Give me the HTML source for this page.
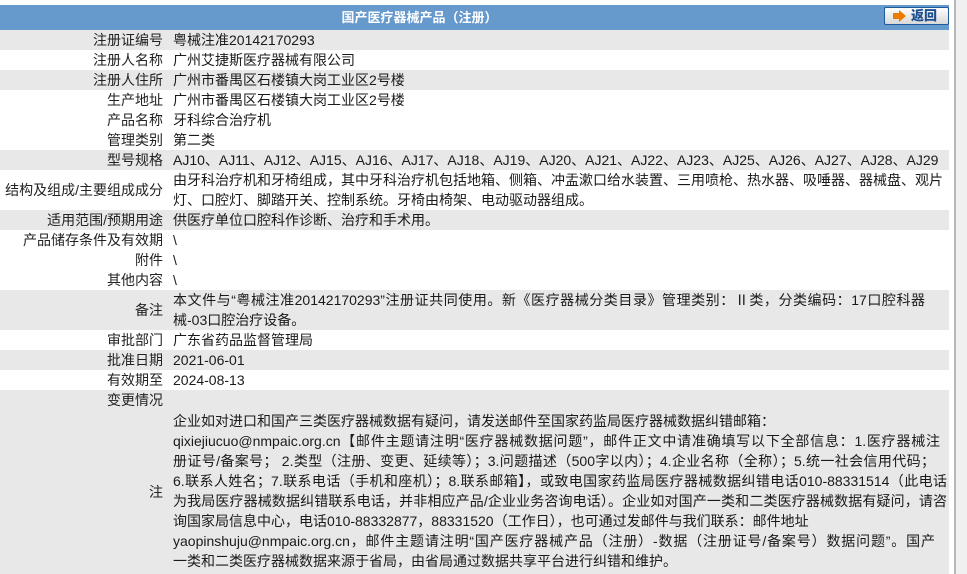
<!DOCTYPE html>
<html><head><meta charset="utf-8">
<style>
html,body{margin:0;padding:0;width:967px;height:574px;overflow:hidden;background:#fff;}
body{font-family:"Liberation Sans","Noto Sans CJK SC",sans-serif;font-size:14px;color:#1a1a1a;position:relative;}
#side{position:absolute;left:954px;top:0;width:13px;height:574px;background:#f0f0f0;border-left:2px solid #b8b8b8;box-sizing:border-box;}
#hdr{position:absolute;left:0;top:5px;width:949px;height:25px;background:#6699cc;color:#fff;font-weight:bold;font-size:13px;line-height:25px;text-align:center;}
#hdr span{position:relative;left:-55px;}
#btn{position:absolute;left:884px;top:7px;width:63px;height:16px;border:1px solid #1f5a9a;border-radius:2px;background:linear-gradient(#fdfdfd,#d8d8d8);color:#1c4f8f;font-weight:bold;font-size:13px;line-height:16px;}
#btn svg{position:absolute;left:8px;top:2px;}
#btn b{position:absolute;left:26px;top:0;}
.r{position:absolute;left:0;width:949px;}
.g{background:#e8e8e8;}
.l{position:absolute;left:0;width:163px;text-align:right;white-space:nowrap;color:#222;}
.v{position:absolute;left:173px;white-space:nowrap;line-height:20px;}
.v span{display:block;height:20px;}
.j{text-align:justify;text-align-last:justify;white-space:normal;}
</style></head><body>
<div id="side"></div>
<div id="hdr"><span>国产医疗器械产品（注册）</span></div>
<div id="btn"><svg width="14" height="12" viewBox="0 0 14 12"><path d="M0 3h6V0l7 6-7 6V9H0z" fill="#e87b00"/></svg><b>返回</b></div>

<div class="r g" style="top:30px;height:20px"><div class="l" style="line-height:20px">注册证编号</div><div class="v">粤械注准20142170293</div></div>
<div class="r" style="top:50px;height:20px"><div class="l" style="line-height:20px">注册人名称</div><div class="v">广州艾捷斯医疗器械有限公司</div></div>
<div class="r g" style="top:70px;height:20px"><div class="l" style="line-height:20px">注册人住所</div><div class="v">广州市番禺区石楼镇大岗工业区2号楼</div></div>
<div class="r" style="top:90px;height:20px"><div class="l" style="line-height:20px">生产地址</div><div class="v">广州市番禺区石楼镇大岗工业区2号楼</div></div>
<div class="r" style="top:110px;height:20px"><div class="l" style="line-height:20px">产品名称</div><div class="v">牙科综合治疗机</div></div>
<div class="r" style="top:130px;height:20px"><div class="l" style="line-height:20px">管理类别</div><div class="v">第二类</div></div>
<div class="r g" style="top:150px;height:20px"><div class="l" style="line-height:20px">型号规格</div><div class="v">AJ10、AJ11、AJ12、AJ15、AJ16、AJ17、AJ18、AJ19、AJ20、AJ21、AJ22、AJ23、AJ25、AJ26、AJ27、AJ28、AJ29</div></div>
<div class="r" style="top:170px;height:40px"><div class="l" style="line-height:40px">结构及组成/主要组成成分</div><div class="v">由牙科治疗机和牙椅组成，其中牙科治疗机包括地箱、侧箱、冲盂漱口给水装置、三用喷枪、热水器、吸唾器、器械盘、观片<br>灯、口腔灯、脚踏开关、控制系统。牙椅由椅架、电动驱动器组成。</div></div>
<div class="r g" style="top:210px;height:20px"><div class="l" style="line-height:20px">适用范围/预期用途</div><div class="v">供医疗单位口腔科作诊断、治疗和手术用。</div></div>
<div class="r" style="top:230px;height:20px"><div class="l" style="line-height:20px">产品储存条件及有效期</div><div class="v">\</div></div>
<div class="r" style="top:250px;height:20px"><div class="l" style="line-height:20px">附件</div><div class="v">\</div></div>
<div class="r" style="top:270px;height:20px"><div class="l" style="line-height:20px">其他内容</div><div class="v">\</div></div>
<div class="r g" style="top:290px;height:40px"><div class="l" style="line-height:40px">备注</div><div class="v"><span class="j" style="width:752px">本文件与“粤械注准20142170293”注册证共同使用。新《医疗器械分类目录》管理类别：Ⅱ类，分类编码：17口腔科器</span><span>械-03口腔治疗设备。</span></div></div>
<div class="r" style="top:330px;height:20px"><div class="l" style="line-height:20px">审批部门</div><div class="v">广东省药品监督管理局</div></div>
<div class="r g" style="top:350px;height:20px"><div class="l" style="line-height:20px">批准日期</div><div class="v">2021-06-01</div></div>
<div class="r" style="top:370px;height:20px"><div class="l" style="line-height:20px">有效期至</div><div class="v">2024-08-13</div></div>
<div class="r g" style="top:390px;height:184px">
<div class="l" style="line-height:20px">变更情况</div>
<div class="l" style="top:20px;line-height:164px">注</div>
<div class="v" style="top:21px;">
<span>企业如对进口和国产三类医疗器械数据有疑问，请发送邮件至国家药监局医疗器械数据纠错邮箱：</span>
<span class="j" style="width:767px">qixiejiucuo@nmpaic.org.cn【邮件主题请注明“医疗器械数据问题”，邮件正文中请准确填写以下全部信息：1.医疗器械注</span>
<span class="j" style="width:762px">册证号/备案号； 2.类型（注册、变更、延续等）；3.问题描述（500字以内）；4.企业名称（全称）；5.统一社会信用代码；</span>
<span class="j" style="width:774px">6.联系人姓名；7.联系电话（手机和座机）；8.联系邮箱】，或致电国家药监局医疗器械数据纠错电话010-88331514（此电话</span>
<span class="j" style="width:774px">为我局医疗器械数据纠错联系电话，并非相应产品/企业业务咨询电话）。企业如对国产一类和二类医疗器械数据有疑问，请咨</span>
<span>询国家局信息中心，电话010-88332877，88331520（工作日），也可通过发邮件与我们联系：邮件地址</span>
<span class="j" style="width:762px">yaopinshuju@nmpaic.org.cn，邮件主题请注明“国产医疗器械产品（注册）-数据（注册证号/备案号）数据问题”。国产</span>
<span>一类和二类医疗器械数据来源于省局，由省局通过数据共享平台进行纠错和维护。</span>
</div>
</div>
</body></html>
